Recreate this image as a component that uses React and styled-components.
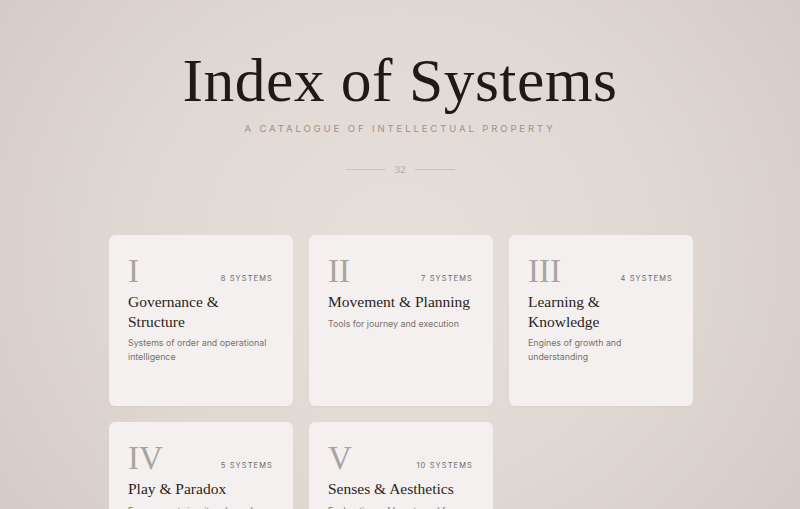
import styled, { createGlobalStyle } from "styled-components";

const GlobalStyle = createGlobalStyle`
    html, body {
        margin: 0;
        padding: 0;
    }
    body {
        background: #d9d0cb;
        font-family: "Inter", "Liberation Sans", sans-serif;
        overflow: hidden;
    }
`;

const Page = styled.div`
    min-height: 509px;
    background: radial-gradient(ellipse 60% 75% at 50% 42%, #e6dfda 0%, #e0d8d3 55%, #d5ccc7 100%);
    display: flex;
    flex-direction: column;
    align-items: center;
    padding-top: 46px;
    box-sizing: border-box;
`;

const Title = styled.h1`
    margin: 0;
    font-family: "Liberation Serif", "DejaVu Serif", serif;
    font-weight: 400;
    font-size: 61.5px;
    line-height: 68px;
    color: #1f1a18;
    letter-spacing: 0.5px;
`;

const Subtitle = styled.div`
    margin-top: 9px;
    font-size: 9.5px;
    letter-spacing: 2.9px;
    color: #9a918c;
    text-transform: uppercase;
`;

const Divider = styled.div`
    margin-top: 29px;
    display: flex;
    align-items: center;
    gap: 9px;
    font-family: "Liberation Serif", serif;
    font-size: 11px;
    color: #b2aaa5;

    &::before, &::after {
        content: "";
        width: 40px;
        height: 1px;
        background: #cbc2bd;
    }
`;

const Grid = styled.div`
    margin-top: 60px;
    display: grid;
    grid-template-columns: repeat(3, 184px);
    gap: 16px;
    margin-left: 2px;
`;

const Card = styled.div`
    height: 171px;
    box-sizing: border-box;
    background: #f4f0ef;
    border-radius: 6px;
    padding: 20px 20px 0 19px;
    box-shadow: 0 1px 2px rgba(120, 100, 90, 0.06);
`;

const CardTop = styled.div`
    display: flex;
    justify-content: space-between;
    align-items: baseline;
`;

const Numeral = styled.span`
    font-family: "Liberation Serif", serif;
    font-weight: 400;
    font-size: 33px;
    line-height: 32px;
    color: #a9a4a1;
`;

const Count = styled.span`
    font-size: 7.5px;
    letter-spacing: 1.1px;
    color: #6f6864;
    text-transform: uppercase;
    position: relative;
    top: -1px;
`;

const CardTitle = styled.h2`
    margin: 5px 0 0;
    font-family: "Liberation Serif", serif;
    font-weight: 400;
    font-size: 15.5px;
    line-height: 19.5px;
    color: #2a2421;
    max-width: ${(p) => (p.$narrow ? "110px" : "none")};
`;

const CardText = styled.p`
    margin: 5px 0 0;
    font-size: 8.8px;
    line-height: 14px;
    color: #79716d;
    max-width: 140px;
`;

const categories = [
    { num: "I", count: 8, title: "Governance & Structure", text: "Systems of order and operational intelligence", narrow: true },
    { num: "II", count: 7, title: "Movement & Planning", text: "Tools for journey and execution" },
    { num: "III", count: 4, title: "Learning & Knowledge", text: "Engines of growth and understanding", narrow: true },
    { num: "IV", count: 5, title: "Play & Paradox", text: "Engagements in wit and wonder" },
    { num: "V", count: 10, title: "Senses & Aesthetics", text: "Explorations of beauty and form" },
];

const App = () => {
    return (
        <>
            <GlobalStyle />
            <Page>
                <Title>Index of Systems</Title>
                <Subtitle>A Catalogue of Intellectual Property</Subtitle>
                <Divider>32</Divider>
                <Grid>
                    {categories.map((c) => (
                        <Card key={c.num}>
                            <CardTop>
                                <Numeral>{c.num}</Numeral>
                                <Count>{c.count} Systems</Count>
                            </CardTop>
                            <CardTitle $narrow={c.narrow}>{c.title}</CardTitle>
                            <CardText>{c.text}</CardText>
                        </Card>
                    ))}
                </Grid>
            </Page>
        </>
    );
};

export default App;
